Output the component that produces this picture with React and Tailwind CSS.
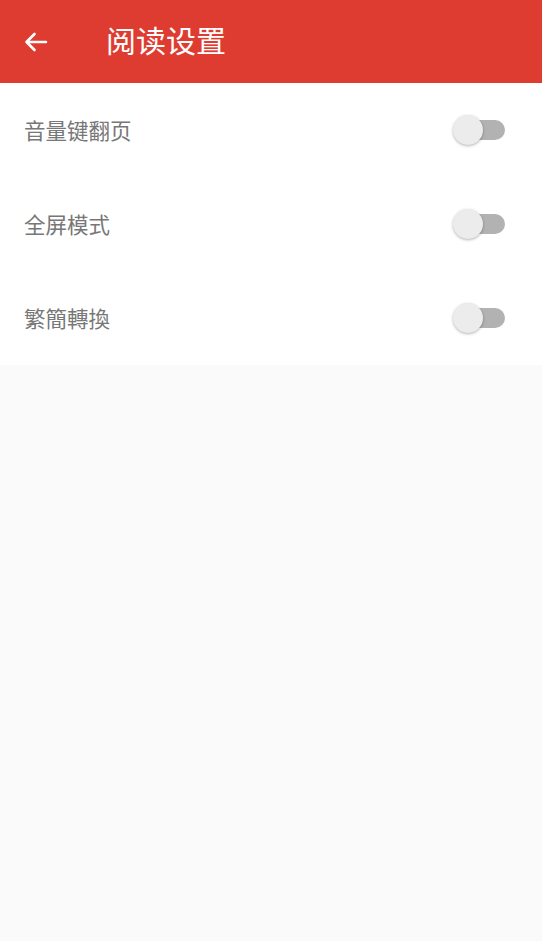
import React, { useState } from 'react';

const font = { fontFamily: '"Noto Sans CJK SC", "Noto Sans", sans-serif' };

const Toggle = ({ on, onChange }) => (
    <button
        onClick={onChange}
        className="relative w-[52px] h-[30px] flex items-center shrink-0"
    >
        <span className={`absolute left-[5px] right-0 h-[20px] rounded-full ${on ? 'bg-[#f0a19b]' : 'bg-[#b2b2b2]'}`} />
        <span
            className={`absolute top-0 w-[30px] h-[30px] rounded-full shadow-[0_1px_3px_rgba(0,0,0,0.3)] transition-all ${on ? 'left-[22px] bg-[#e03e33]' : 'left-0 bg-[#ececec]'}`}
        />
    </button>
);

export default function App() {
    const [settings, setSettings] = useState({ volume: false, fullscreen: false, convert: false });

    const rows = [
        { key: 'volume', label: '音量键翻页' },
        { key: 'fullscreen', label: '全屏模式' },
        { key: 'convert', label: '繁簡轉換' },
    ];

    return (
        <div className="min-h-[941px] bg-[#fafafa] flex flex-col" style={font}>
            <header className="h-[83px] bg-[#df3c31] flex items-center shrink-0">
                <button className="w-[72px] h-full flex items-center pl-[24px]">
                    <svg width="24" height="20" viewBox="0 0 24 20" fill="none" stroke="white" strokeWidth="2.6" strokeLinecap="round" strokeLinejoin="round">
                        <path d="M22 10H2.5M10.5 2L2.5 10l8 8" />
                    </svg>
                </button>
                <h1 className="ml-[34px] -mt-[6px] text-white text-[30px] leading-none">阅读设置</h1>
            </header>

            <div className="bg-white">
                {rows.map(r => (
                    <div key={r.key} className="h-[94px] flex items-center justify-between pl-[24px] pr-[37px]">
                        <span className="text-[21.5px] text-[#777777]">{r.label}</span>
                        <Toggle
                            on={settings[r.key]}
                            onChange={() => setSettings(s => ({ ...s, [r.key]: !s[r.key] }))}
                        />
                    </div>
                ))}
            </div>
        </div>
    );
}
